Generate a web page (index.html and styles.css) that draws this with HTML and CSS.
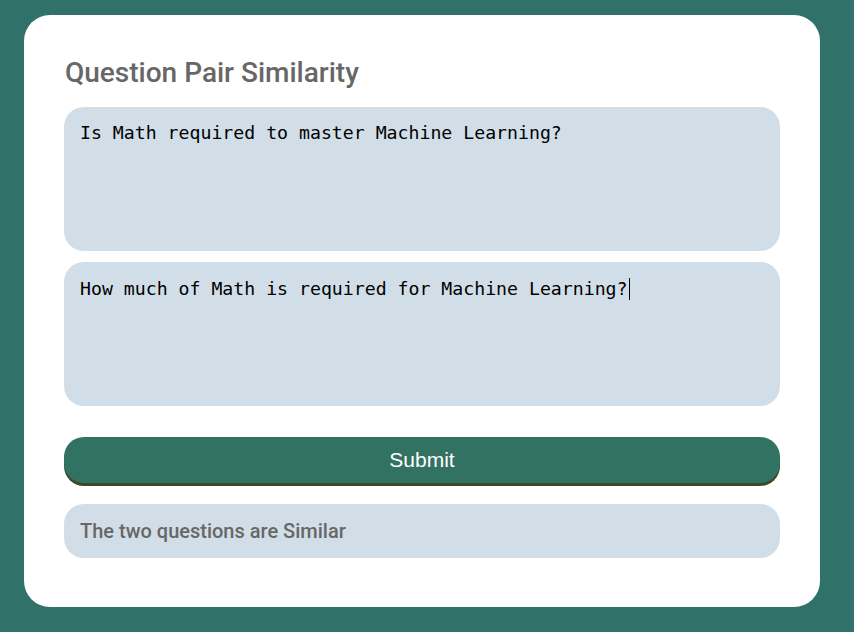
FILE: index.html
```html
<!DOCTYPE html>
<html>
<head>
<meta charset="utf-8">
<link rel="stylesheet" href="styles.css">
</head>
<body>
<main class="card">
  <h1 class="title">Question Pair Similarity</h1>
  <textarea class="field">Is Math required to master Machine Learning?</textarea>
  <div class="field field-active">How much of Math is required for Machine Learning?<span class="caret"></span></div>
  <button class="submit">Submit</button>
  <div class="result">The two questions are Similar</div>
</main>
</body>
</html>
```

FILE: styles.css
```css
html, body {
  margin: 0;
  padding: 0;
  background: #30716a;
  height: 100%;
}
body {
  padding: 15px 34px 25px 24px;
  box-sizing: border-box;
}
.card {
  background: #ffffff;
  border-radius: 26px;
  padding: 40px 40px 50px 40px;
  display: flex;
  flex-direction: column;
  height: 100%;
  box-sizing: border-box;
}
.title {
  margin: 0 0 16px 1px;
  font-family: Roboto, "Liberation Sans", sans-serif;
  font-weight: 500;
  font-size: 28px;
  line-height: 36px;
  color: #676767;
}
.field {
  display: block;
  box-sizing: border-box;
  width: 100%;
  height: 144px;
  flex-shrink: 0;
  margin: 0 0 11px 0;
  padding: 14px 16px;
  border: none;
  outline: none;
  resize: none;
  border-radius: 20px;
  background: #d1dee7;
  font-family: "DejaVu Sans Mono", "Liberation Mono", monospace;
  font-size: 18.2px;
  line-height: 24px;
  color: #000;
}
.field-active {
  margin-bottom: 31px;
  padding-top: 15px;
}
.caret {
  display: inline-block;
  width: 1px;
  height: 22px;
  background: #000;
  vertical-align: -5px;
  margin-left: 1px;
}
.submit {
  height: 46px;
  flex-shrink: 0;
  border: none;
  border-radius: 20px;
  background: #327262;
  box-shadow: 0 3px 0 #3a4a26;
  color: #fff;
  font-family: "Liberation Sans", Arial, sans-serif;
  font-size: 21px;
  margin: 0 0 21px 0;
  padding: 0;
}
.result {
  height: 54px;
  flex-shrink: 0;
  box-sizing: border-box;
  border-radius: 20px;
  background: #d1dee7;
  padding: 0 16px;
  display: flex;
  align-items: center;
  font-family: Roboto, "Liberation Sans", sans-serif;
  font-weight: 500;
  font-size: 20px;
  color: #676767;
}
```
